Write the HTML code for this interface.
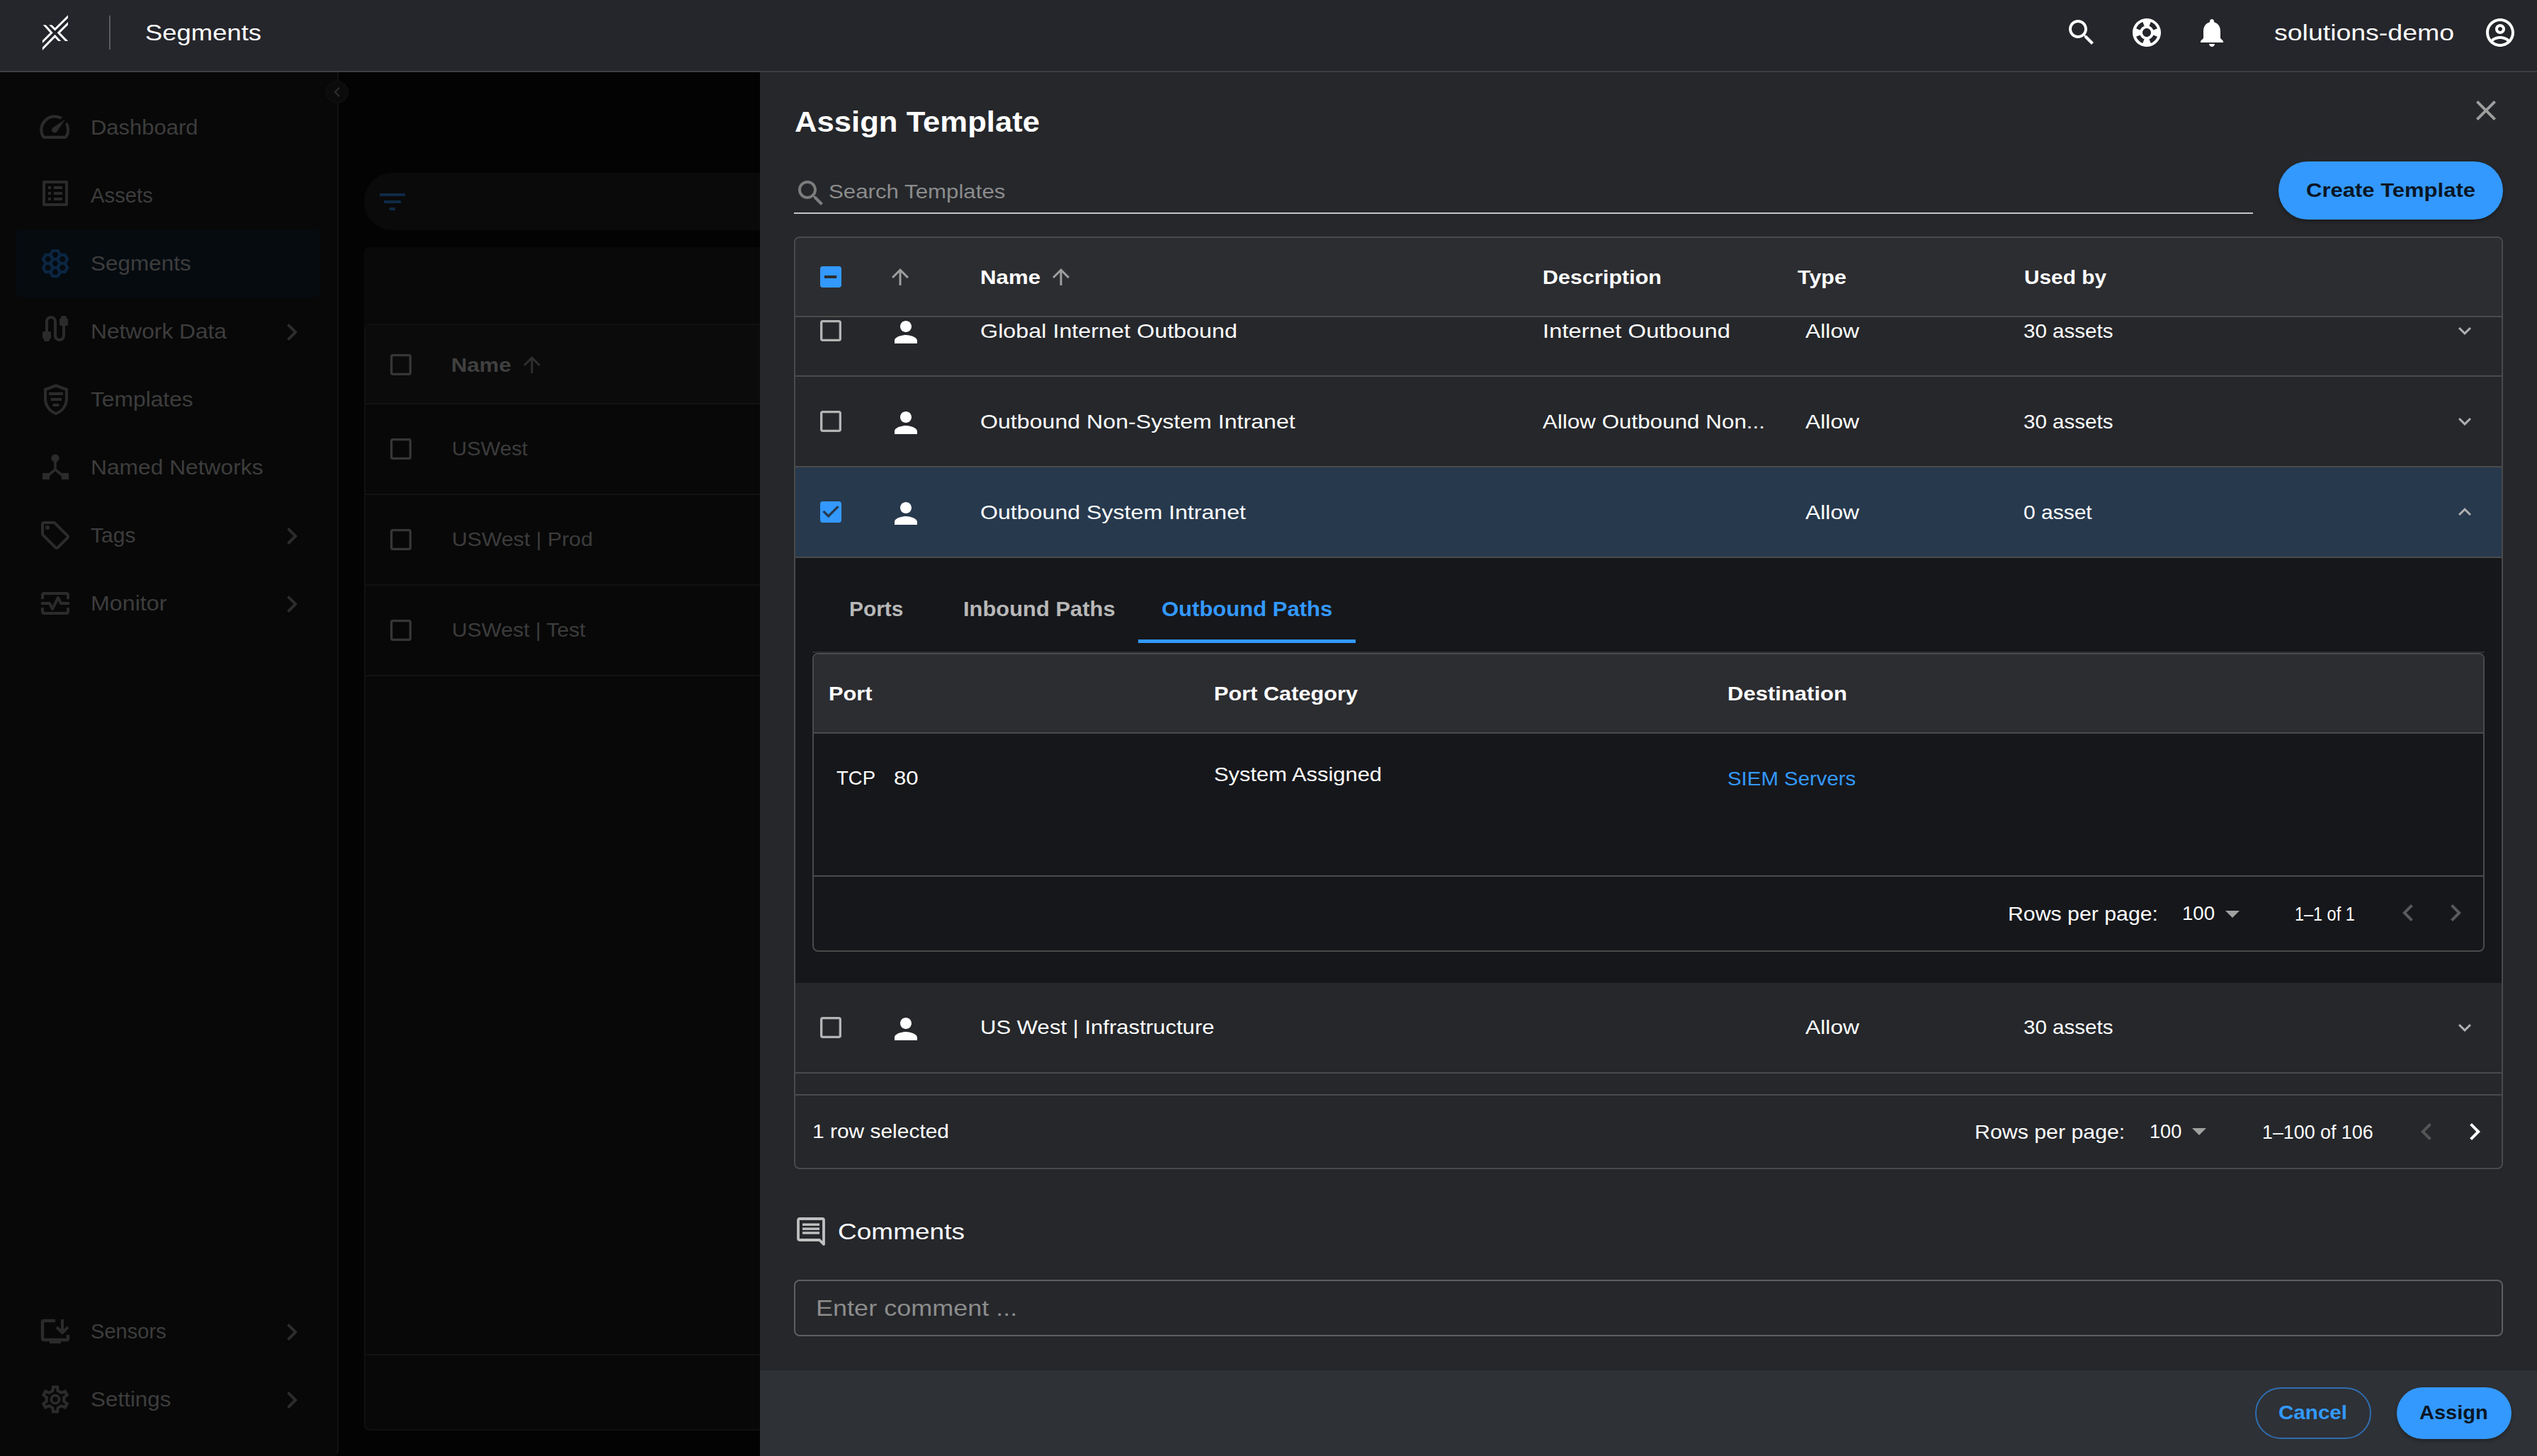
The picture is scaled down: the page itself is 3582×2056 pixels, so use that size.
<!DOCTYPE html><html><head><meta charset="utf-8"><style>
html{overflow:hidden;}html,body{margin:0;padding:0;}body{width:3582px;height:2056px;overflow:hidden;position:relative;background:#030303;font-family:"Liberation Sans",sans-serif;}
.t{position:absolute;white-space:nowrap;}svg{display:block}
</style></head><body>
<div style="position:absolute;left:0px;top:102px;width:478px;height:1954px;background:#080808;border-right:2px solid #121212;box-sizing:border-box;border-bottom-right-radius:8px"></div>
<div style="position:absolute;left:460px;top:114px;width:32px;height:32px;border-radius:50%;background:#0b0b0b;border:1px solid #141414;box-sizing:border-box"></div>
<svg style="position:absolute;left:461.7px;top:116px" width="28" height="28" viewBox="0 0 24 24"><path fill="#2c2c2c" d="M15.41 7.41L14 6l-6 6 6 6 1.41-1.41L10.83 12z"/></svg>
<div style="position:absolute;left:22px;top:324px;width:430px;height:96px;background:#060b10;border-radius:8px"></div>
<div class="t" style="left:127.5px;top:165.0px;font-size:30px;line-height:30px;color:#3d3d3d;font-weight:normal;transform:scaleX(1.0323);transform-origin:0 0;">Dashboard</div>
<svg style="position:absolute;left:51.9px;top:154.0px" width="50.4" height="50.4" viewBox="0 0 24 24"><path fill="#2b2b2b" d="M20.38 8.57l-1.23 1.85a8 8 0 0 1-.22 7.58H5.07A8 8 0 0 1 15.58 6.85l1.85-1.23A10 10 0 0 0 3.35 19a2 2 0 0 0 1.72 1h13.85a2 2 0 0 0 1.74-1 10 10 0 0 0-.27-10.44zm-9.79 6.84a2 2 0 0 0 2.83 0l5.66-8.49-8.49 5.66a2 2 0 0 0 0 2.83z"/></svg>
<div class="t" style="left:127.5px;top:261.1px;font-size:30px;line-height:30px;color:#3d3d3d;font-weight:normal;transform:scaleX(0.9752);transform-origin:0 0;">Assets</div>
<svg style="position:absolute;left:54.4px;top:248.5px" width="48" height="48" viewBox="0 0 24 24"><path fill="#2b2b2b" d="M19 5v14H5V5h14m1.1-2H3.9c-.5 0-.9.4-.9.9v16.2c0 .4.4.9.9.9h16.2c.4 0 .9-.5.9-.9V3.9c0-.5-.5-.9-.9-.9zM11 7h6v2h-6V7zm0 4h6v2h-6v-2zm0 4h6v2h-6zM7 7h2v2H7zm0 4h2v2H7zm0 4h2v2H7z"/></svg>
<div class="t" style="left:127.5px;top:356.6px;font-size:30px;line-height:30px;color:#3d3d3d;font-weight:normal;transform:scaleX(1.0499);transform-origin:0 0;">Segments</div>
<svg style="position:absolute;left:58px;top:352px" width="40" height="40" viewBox="0 0 40 40"><polygon points="26.99,20.00 23.50,26.05 16.51,26.05 13.01,20.00 16.50,13.95 23.50,13.95" fill="none" stroke="#0b2642" stroke-width="4.1"/><polygon points="26.99,7.90 23.50,13.95 16.51,13.95 13.01,7.90 16.50,1.85 23.50,1.85" fill="none" stroke="#0b2642" stroke-width="4.1"/><polygon points="26.99,32.10 23.50,38.15 16.51,38.15 13.01,32.10 16.50,26.05 23.50,26.05" fill="none" stroke="#0b2642" stroke-width="4.1"/><polygon points="16.94,13.95 13.45,20.00 6.46,20.00 2.96,13.95 6.45,7.90 13.45,7.90" fill="none" stroke="#0b2642" stroke-width="4.1"/><polygon points="37.04,13.95 33.55,20.00 26.56,20.00 23.06,13.95 26.55,7.90 33.55,7.90" fill="none" stroke="#0b2642" stroke-width="4.1"/><polygon points="16.94,26.05 13.45,32.10 6.46,32.10 2.96,26.05 6.45,20.00 13.45,20.00" fill="none" stroke="#0b2642" stroke-width="4.1"/><polygon points="37.04,26.05 33.55,32.10 26.56,32.10 23.06,26.05 26.55,20.00 33.55,20.00" fill="none" stroke="#0b2642" stroke-width="4.1"/></svg>
<div class="t" style="left:127.5px;top:452.7px;font-size:30px;line-height:30px;color:#3d3d3d;font-weight:normal;transform:scaleX(1.0565);transform-origin:0 0;">Network Data</div>
<svg style="position:absolute;left:54.4px;top:440.1px" width="48" height="48" viewBox="0 0 24 24"><path fill="#2b2b2b" d="M20 5V4c0-.55-.45-1-1-1h-2c-.55 0-1 .45-1 1v1h-1v4c0 .55.45 1 1 1h1v7c0 1.1-.9 2-2 2s-2-.9-2-2V7c0-2.21-1.79-4-4-4S5 4.79 5 7v7H4c-.55 0-1 .45-1 1v4h1v1c0 .55.45 1 1 1h2c.55 0 1-.45 1-1v-1h1v-4c0-.55-.45-1-1-1H7V7c0-1.1.9-2 2-2s2 .9 2 2v10c0 2.21 1.79 4 4 4s4-1.79 4-4v-7h1c.55 0 1-.45 1-1V5h-1z"/></svg>
<svg style="position:absolute;left:388.2px;top:444.6px" width="48" height="48" viewBox="0 0 24 24"><path fill="#2c2c2c" d="M10 6L8.59 7.41 13.17 12l-4.58 4.59L10 18l6-6z"/></svg>
<div class="t" style="left:127.5px;top:548.5px;font-size:30px;line-height:30px;color:#3d3d3d;font-weight:normal;transform:scaleX(1.0582);transform-origin:0 0;">Templates</div>
<svg style="position:absolute;left:59px;top:541.9px" width="40" height="46" viewBox="0 0 40 46"><path d="M20 2.5 L35 8 V21 C35 31 28.5 39 20 42 C11.5 39 5 31 5 21 V8 Z" fill="none" stroke="#2b2b2b" stroke-width="4"/><rect x="10" y="12" width="20" height="4" fill="#2b2b2b"/><rect x="12.6" y="20" width="15.4" height="4" fill="#2b2b2b"/><rect x="15.6" y="28" width="8.7" height="4" fill="#2b2b2b"/></svg>
<div class="t" style="left:127.5px;top:644.6px;font-size:30px;line-height:30px;color:#3d3d3d;font-weight:normal;transform:scaleX(1.0584);transform-origin:0 0;">Named Networks</div>
<svg style="position:absolute;left:58px;top:640px" width="40" height="40" viewBox="0 0 40 40"><circle cx="20" cy="7" r="5.6" fill="#2b2b2b"/><path d="M20 11 V23 L8 33 M20 23 L32 33" stroke="#2b2b2b" stroke-width="3.6" fill="none"/><rect x="2" y="28" width="10" height="9" fill="#2b2b2b"/><rect x="29" y="28" width="10" height="9" fill="#2b2b2b"/></svg>
<div class="t" style="left:127.5px;top:740.6px;font-size:30px;line-height:30px;color:#3d3d3d;font-weight:normal;transform:scaleX(1.0022);transform-origin:0 0;">Tags</div>
<svg style="position:absolute;left:54px;top:731.8px" width="48" height="48" viewBox="0 0 24 24"><path fill="#2b2b2b" d="M21.41 11.58l-9-9C12.05 2.22 11.55 2 11 2H4c-1.1 0-2 .9-2 2v7c0 .55.22 1.05.59 1.42l9 9c.36.36.86.58 1.41.58.55 0 1.05-.22 1.41-.59l7-7c.37-.36.59-.86.59-1.41 0-.55-.23-1.06-.59-1.42zM13 20.01L4 11V4h7v-.01l9 9-7 7.02zM6.5 5A1.5 1.5 0 1 0 6.5 8 1.5 1.5 0 1 0 6.5 5z"/></svg>
<svg style="position:absolute;left:388.2px;top:732.5px" width="48" height="48" viewBox="0 0 24 24"><path fill="#2c2c2c" d="M10 6L8.59 7.41 13.17 12l-4.58 4.59L10 18l6-6z"/></svg>
<div class="t" style="left:127.5px;top:837.0px;font-size:30px;line-height:30px;color:#3d3d3d;font-weight:normal;transform:scaleX(1.0745);transform-origin:0 0;">Monitor</div>
<svg style="position:absolute;left:54px;top:828.0px" width="48" height="48" viewBox="0 0 24 24"><path fill="#2b2b2b" d="M20 4H4c-1.1 0-2 .9-2 2v3h2V6h16v3h2V6c0-1.1-.9-2-2-2zm0 14H4v-3H2v3c0 1.1.9 2 2 2h16c1.1 0 2-.9 2-2v-3h-2v3zM14.89 7.55c-.34-.68-1.45-.68-1.79 0L10 13.76l-1.11-2.21c-.17-.34-.51-.55-.89-.55H2v2h5.38l1.72 3.45c.18.34.52.55.9.55s.72-.21.89-.55L14 10.24l1.11 2.21c.17.34.51.55.89.55h6v-2h-5.38l-1.73-3.45z"/></svg>
<svg style="position:absolute;left:388.2px;top:828.9px" width="48" height="48" viewBox="0 0 24 24"><path fill="#2c2c2c" d="M10 6L8.59 7.41 13.17 12l-4.58 4.59L10 18l6-6z"/></svg>
<div class="t" style="left:127.5px;top:1865.1px;font-size:30px;line-height:30px;color:#3d3d3d;font-weight:normal;transform:scaleX(0.9696);transform-origin:0 0;">Sensors</div>
<svg style="position:absolute;left:56px;top:1860.5px" width="44" height="40" viewBox="0 0 44 40"><path d="M22 4 H6 Q4 4 4 6 V29 Q4 31 6 31 H38 Q40 31 40 29 V24" fill="none" stroke="#2b2b2b" stroke-width="4.5"/><rect x="14" y="31" width="16" height="5" fill="#2b2b2b"/><path d="M32 2 V21 M24 13 L32 21 L40 13" fill="none" stroke="#2b2b2b" stroke-width="4"/></svg>
<svg style="position:absolute;left:388.2px;top:1857.0px" width="48" height="48" viewBox="0 0 24 24"><path fill="#2c2c2c" d="M10 6L8.59 7.41 13.17 12l-4.58 4.59L10 18l6-6z"/></svg>
<div class="t" style="left:127.5px;top:1960.9px;font-size:30px;line-height:30px;color:#3d3d3d;font-weight:normal;transform:scaleX(1.0471);transform-origin:0 0;">Settings</div>
<svg style="position:absolute;left:53.8px;top:1952.2px" width="48" height="48" viewBox="0 0 48 48"><polygon points="20.32,11.95 21.06,6.44 26.94,6.44 27.68,11.95 32.59,14.78 37.73,12.68 40.67,17.77 36.28,21.17 36.28,26.83 40.67,30.23 37.73,35.32 32.59,33.22 27.68,36.05 26.94,41.56 21.06,41.56 20.32,36.05 15.41,33.22 10.27,35.32 7.33,30.23 11.72,26.83 11.72,21.17 7.33,17.77 10.27,12.68 15.41,14.78" fill="none" stroke="#2b2b2b" stroke-width="4.1" stroke-linejoin="miter"/><circle cx="24" cy="24" r="5.6" fill="none" stroke="#2b2b2b" stroke-width="3.9"/></svg>
<svg style="position:absolute;left:388.2px;top:1952.8px" width="48" height="48" viewBox="0 0 24 24"><path fill="#2c2c2c" d="M10 6L8.59 7.41 13.17 12l-4.58 4.59L10 18l6-6z"/></svg>
<div style="position:absolute;left:514px;top:244px;width:600px;height:81px;background:#0a0a0a;border-radius:40px 0 0 40px"></div>
<svg style="position:absolute;left:530px;top:261px" width="48" height="48" viewBox="0 0 24 24"><path fill="#0f2a47" d="M10 18h4v-2h-4v2zM3 6v2h18V6H3zm3 7h12v-2H6v2z"/></svg>
<div style="position:absolute;left:514px;top:349px;width:600px;height:120px;background:#090909;border-radius:8px 0 0 0"></div>
<div style="position:absolute;left:514px;top:457px;width:600px;height:1563px;background:#080808;border-radius:8px;border:2px solid #101010;box-sizing:border-box"></div>
<div style="position:absolute;left:516px;top:459px;width:600px;height:110px;background:#0b0b0b;border-radius:6px 0 0 0"></div>
<div style="position:absolute;left:516px;top:569px;width:600px;height:2px;background:#121212"></div>
<div style="position:absolute;left:516px;top:697px;width:600px;height:2px;background:#121212"></div>
<div style="position:absolute;left:516px;top:825px;width:600px;height:2px;background:#121212"></div>
<div style="position:absolute;left:516px;top:953px;width:600px;height:2px;background:#121212"></div>
<div style="position:absolute;left:516px;top:1912px;width:600px;height:2px;background:#121212"></div>
<svg style="position:absolute;left:546px;top:495px" width="40" height="40" viewBox="0 0 24 24"><path fill="#363636" d="M19 5v14H5V5h14m0-2H5c-1.1 0-2 .9-2 2v14c0 1.1.9 2 2 2h14c1.1 0 2-.9 2-2V5c0-1.1-.9-2-2-2z"/></svg>
<div class="t" style="left:637.4px;top:501.7px;font-size:28px;line-height:28px;color:#404040;font-weight:bold;transform:scaleX(1.1105);transform-origin:0 0;">Name</div>
<svg style="position:absolute;left:733px;top:497px" width="36" height="36" viewBox="0 0 24 24"><path fill="#2e2e2e" d="M4 12l1.41 1.41L11 7.83V20h2V7.83l5.58 5.59L20 12l-8-8-8 8z"/></svg>
<svg style="position:absolute;left:546px;top:613.9px" width="40" height="40" viewBox="0 0 24 24"><path fill="#363636" d="M19 5v14H5V5h14m0-2H5c-1.1 0-2 .9-2 2v14c0 1.1.9 2 2 2h14c1.1 0 2-.9 2-2V5c0-1.1-.9-2-2-2z"/></svg>
<div class="t" style="left:638.0px;top:620.2px;font-size:28px;line-height:28px;color:#3c3c3c;font-weight:normal;transform:scaleX(1.0473);transform-origin:0 0;">USWest</div>
<svg style="position:absolute;left:546px;top:742px" width="40" height="40" viewBox="0 0 24 24"><path fill="#363636" d="M19 5v14H5V5h14m0-2H5c-1.1 0-2 .9-2 2v14c0 1.1.9 2 2 2h14c1.1 0 2-.9 2-2V5c0-1.1-.9-2-2-2z"/></svg>
<div class="t" style="left:638.0px;top:748.3px;font-size:28px;line-height:28px;color:#3c3c3c;font-weight:normal;transform:scaleX(1.0806);transform-origin:0 0;">USWest | Prod</div>
<svg style="position:absolute;left:546px;top:870px" width="40" height="40" viewBox="0 0 24 24"><path fill="#363636" d="M19 5v14H5V5h14m0-2H5c-1.1 0-2 .9-2 2v14c0 1.1.9 2 2 2h14c1.1 0 2-.9 2-2V5c0-1.1-.9-2-2-2z"/></svg>
<div class="t" style="left:638.0px;top:876.3px;font-size:28px;line-height:28px;color:#3c3c3c;font-weight:normal;transform:scaleX(1.0726);transform-origin:0 0;">USWest | Test</div>
<div style="position:absolute;left:0px;top:0px;width:3582px;height:100px;background:#25262b"></div>
<div style="position:absolute;left:0px;top:100px;width:3582px;height:2px;background:#3d3e42"></div>
<svg style="position:absolute;left:50px;top:15px" width="60" height="60" viewBox="0 0 60 60"><defs><clipPath id="c1"><rect x="9.9" y="20.2" width="36" height="40"/></clipPath><clipPath id="c2"><polygon points="9.9,20.2 27.6,20.2 45.9,2 45.9,60 9.9,60"/></clipPath><clipPath id="c3"><rect x="0" y="0" width="45.9" height="43"/></clipPath><clipPath id="c4"><polygon points="9.9,0 60,0 60,43 27.6,43 9.9,60.7"/></clipPath></defs><g fill="none" stroke="#fff" stroke-width="3.0" stroke-linejoin="miter" stroke-miterlimit="10"><polyline clip-path="url(#c1)" points="9,16 22.7,31.3 7,47"/><polyline clip-path="url(#c3)" points="50,14 32.8,31.3 46,45"/><polyline clip-path="url(#c2)" points="17,16 27.6,26.5 49,5.5"/><polyline clip-path="url(#c4)" points="6,58 27.6,36 37,46"/></g></svg>
<div style="position:absolute;left:154px;top:22px;width:2px;height:48px;background:#5a5b5f"></div>
<div class="t" style="left:205.0px;top:30.3px;font-size:32px;line-height:32px;color:#ffffff;font-weight:normal;transform:scaleX(1.1384);transform-origin:0 0;">Segments</div>
<svg style="position:absolute;left:2915px;top:22px" width="48" height="48" viewBox="0 0 24 24"><path fill="#fff" d="M15.5 14h-.79l-.28-.27C15.41 12.59 16 11.11 16 9.5 16 5.91 13.09 3 9.5 3S3 5.91 3 9.5 5.91 16 9.5 16c1.61 0 3.09-.59 4.23-1.57l.27.28v.79l5 4.99L20.49 19l-4.99-5zm-6 0C7.01 14 5 11.99 5 9.5S7.01 5 9.5 5 14 7.01 14 9.5 11.99 14 9.5 14z"/></svg>
<svg style="position:absolute;left:3007px;top:22px" width="48" height="48" viewBox="0 0 24 24"><path fill="#fff" d="M12 2C6.48 2 2 6.48 2 12s4.48 10 10 10 10-4.48 10-10S17.52 2 12 2zm7.46 7.12-2.78 1.15c-.51-1.36-1.58-2.44-2.95-2.94l1.15-2.78c2.1.8 3.77 2.47 4.58 4.57zM12 15c-1.66 0-3-1.34-3-3s1.34-3 3-3 3 1.34 3 3-1.34 3-3 3zM9.13 4.54l1.17 2.78c-1.38.5-2.47 1.59-2.98 2.97L4.54 9.13c.81-2.11 2.48-3.78 4.59-4.59zM4.54 14.87l2.78-1.15c.51 1.38 1.59 2.46 2.97 2.96l-1.17 2.78c-2.1-.81-3.77-2.48-4.58-4.59zm10.34 4.59-1.15-2.78c1.37-.51 2.45-1.59 2.95-2.97l2.78 1.17c-.81 2.1-2.48 3.77-4.58 4.58z"/></svg>
<svg style="position:absolute;left:3099px;top:22px" width="48" height="48" viewBox="0 0 24 24"><path fill="#fff" d="M12 22c1.1 0 2-.9 2-2h-4c0 1.1.89 2 2 2zm6-6v-5c0-3.07-1.64-5.64-4.5-6.32V4c0-.83-.67-1.5-1.5-1.5s-1.5.67-1.5 1.5v.68C7.63 5.36 6 7.92 6 11v5l-2 2v1h16v-1l-2-2z"/></svg>
<div class="t" style="left:3211.3px;top:29.9px;font-size:32px;line-height:32px;color:#ffffff;font-weight:normal;transform:scaleX(1.1706);transform-origin:0 0;">solutions-demo</div>
<svg style="position:absolute;left:3506px;top:22px" width="48" height="48" viewBox="0 0 24 24"><path fill="#fff" d="M12 2C6.48 2 2 6.48 2 12s4.48 10 10 10 10-4.48 10-10S17.52 2 12 2zM7.07 18.28c.43-.9 3.05-1.78 4.93-1.78s4.51.88 4.93 1.78C15.57 19.36 13.86 20 12 20s-3.57-.64-4.93-1.72zm11.29-1.45c-1.43-1.74-4.9-2.33-6.36-2.33s-4.93.59-6.36 2.33C4.62 15.49 4 13.82 4 12c0-4.41 3.59-8 8-8s8 3.59 8 8c0 1.82-.62 3.49-1.64 4.83zM12 6c-1.94 0-3.5 1.56-3.5 3.5S10.06 13 12 13s3.5-1.56 3.5-3.5S13.94 6 12 6zm0 5c-.83 0-1.5-.67-1.5-1.5S11.17 8 12 8s1.5.67 1.5 1.5S12.83 11 12 11z"/></svg>
<div style="position:absolute;left:1073px;top:102px;width:2509px;height:1833px;background:#25272b"></div>
<div style="position:absolute;left:1073px;top:1935px;width:2509px;height:121px;background:#2e3136"></div>
<div class="t" style="left:1121.5px;top:152.1px;font-size:40px;line-height:40px;color:#ffffff;font-weight:bold;transform:scaleX(1.0911);transform-origin:0 0;">Assign Template</div>
<svg style="position:absolute;left:3486px;top:132px" width="48" height="48" viewBox="0 0 24 24"><path fill="#9e9e9e" d="M19 6.41L17.59 5 12 10.59 6.41 5 5 6.41 10.59 12 5 17.59 6.41 19 12 13.41 17.59 19 19 17.59 13.41 12z"/></svg>
<svg style="position:absolute;left:1121px;top:249px" width="48" height="48" viewBox="0 0 24 24"><path fill="#7c7c7c" d="M15.5 14h-.79l-.28-.27C15.41 12.59 16 11.11 16 9.5 16 5.91 13.09 3 9.5 3S3 5.91 3 9.5 5.91 16 9.5 16c1.61 0 3.09-.59 4.23-1.57l.27.28v.79l5 4.99L20.49 19l-4.99-5zm-6 0C7.01 14 5 11.99 5 9.5S7.01 5 9.5 5 14 7.01 14 9.5 11.99 14 9.5 14z"/></svg>
<div class="t" style="left:1170.4px;top:256.5px;font-size:28px;line-height:28px;color:#8c8c8c;font-weight:normal;transform:scaleX(1.1153);transform-origin:0 0;">Search Templates</div>
<div style="position:absolute;left:1121px;top:300px;width:2060px;height:2px;background:#c4c4c4"></div>
<div style="position:absolute;left:3217px;top:228px;width:317px;height:82px;background:#3399ff;border-radius:41px;box-shadow:0 3px 5px rgba(0,0,0,0.25)"></div>
<div class="t" style="left:3256.0px;top:255.3px;font-size:28px;line-height:28px;color:#0a1625;font-weight:bold;transform:scaleX(1.1075);transform-origin:0 0;">Create Template</div>
<div style="position:absolute;left:1121px;top:334px;width:2413px;height:1317px;border:2px solid #4a4a4a;border-radius:8px;box-sizing:border-box;overflow:hidden"></div>
<div style="position:absolute;left:1123px;top:336px;width:2409px;height:110px;background:#2c2d31;border-radius:6px 6px 0 0"></div>
<div style="position:absolute;left:1123px;top:446px;width:2409px;height:2px;background:#4a4a4a"></div>
<svg style="position:absolute;left:1153px;top:371px" width="40" height="40" viewBox="0 0 24 24"><path fill="#3399ff" d="M19 3H5c-1.1 0-2 .9-2 2v14c0 1.1.9 2 2 2h14c1.1 0 2-.9 2-2V5c0-1.1-.9-2-2-2zm-2 10H7v-2h10v2z"/></svg>
<div style="position:absolute;left:1164px;top:389px;width:17px;height:4px;background:#2c2d31"></div>
<svg style="position:absolute;left:1253px;top:373px" width="36" height="36" viewBox="0 0 24 24"><path fill="#9e9e9e" d="M4 12l1.41 1.41L11 7.83V20h2V7.83l5.58 5.59L20 12l-8-8-8 8z"/></svg>
<div class="t" style="left:1384.4px;top:377.5px;font-size:28px;line-height:28px;color:#ffffff;font-weight:bold;transform:scaleX(1.1171);transform-origin:0 0;">Name</div>
<svg style="position:absolute;left:1480px;top:373px" width="36" height="36" viewBox="0 0 24 24"><path fill="#9e9e9e" d="M4 12l1.41 1.41L11 7.83V20h2V7.83l5.58 5.59L20 12l-8-8-8 8z"/></svg>
<div class="t" style="left:2178.2px;top:377.7px;font-size:28px;line-height:28px;color:#ffffff;font-weight:bold;transform:scaleX(1.0907);transform-origin:0 0;">Description</div>
<div class="t" style="left:2537.5px;top:377.7px;font-size:28px;line-height:28px;color:#ffffff;font-weight:bold;transform:scaleX(1.0904);transform-origin:0 0;">Type</div>
<div class="t" style="left:2858.0px;top:377.7px;font-size:28px;line-height:28px;color:#ffffff;font-weight:bold;transform:scaleX(1.0650);transform-origin:0 0;">Used by</div>
<svg style="position:absolute;left:1153px;top:447.4px" width="40" height="40" viewBox="0 0 24 24"><path fill="#b4b4b4" d="M19 5v14H5V5h14m0-2H5c-1.1 0-2 .9-2 2v14c0 1.1.9 2 2 2h14c1.1 0 2-.9 2-2V5c0-1.1-.9-2-2-2z"/></svg>
<svg style="position:absolute;left:1255px;top:445.4px" width="48" height="48" viewBox="0 0 24 24"><path fill="#ffffff" d="M12 12c2.21 0 4-1.79 4-4s-1.79-4-4-4-4 1.79-4 4 1.79 4 4 4zm0 2c-2.67 0-8 1.34-8 4v2h16v-2c0-2.66-5.33-4-8-4z"/></svg>
<div class="t" style="left:1384.4px;top:453.7px;font-size:28px;line-height:28px;color:#ffffff;font-weight:normal;transform:scaleX(1.1544);transform-origin:0 0;">Global Internet Outbound</div>
<div class="t" style="left:2178.0px;top:453.7px;font-size:28px;line-height:28px;color:#ffffff;font-weight:normal;transform:scaleX(1.1739);transform-origin:0 0;">Internet Outbound</div>
<div class="t" style="left:2549.0px;top:453.7px;font-size:28px;line-height:28px;color:#ffffff;font-weight:normal;transform:scaleX(1.1372);transform-origin:0 0;">Allow</div>
<div class="t" style="left:2857.0px;top:453.7px;font-size:28px;line-height:28px;color:#ffffff;font-weight:normal;transform:scaleX(1.0556);transform-origin:0 0;">30 assets</div>
<svg style="position:absolute;left:3462px;top:449.4px" width="36" height="36" viewBox="0 0 24 24"><path fill="#b0b0b0" d="M16.59 8.59L12 13.17 7.41 8.59 6 10l6 6 6-6z"/></svg>
<div style="position:absolute;left:1123px;top:530px;width:2409px;height:2px;background:#4a4a4a"></div>
<svg style="position:absolute;left:1153px;top:575.4px" width="40" height="40" viewBox="0 0 24 24"><path fill="#b4b4b4" d="M19 5v14H5V5h14m0-2H5c-1.1 0-2 .9-2 2v14c0 1.1.9 2 2 2h14c1.1 0 2-.9 2-2V5c0-1.1-.9-2-2-2z"/></svg>
<svg style="position:absolute;left:1255px;top:573.4px" width="48" height="48" viewBox="0 0 24 24"><path fill="#ffffff" d="M12 12c2.21 0 4-1.79 4-4s-1.79-4-4-4-4 1.79-4 4 1.79 4 4 4zm0 2c-2.67 0-8 1.34-8 4v2h16v-2c0-2.66-5.33-4-8-4z"/></svg>
<div class="t" style="left:1384.4px;top:581.7px;font-size:28px;line-height:28px;color:#ffffff;font-weight:normal;transform:scaleX(1.1475);transform-origin:0 0;">Outbound Non-System Intranet</div>
<div class="t" style="left:2178.0px;top:581.7px;font-size:28px;line-height:28px;color:#ffffff;font-weight:normal;transform:scaleX(1.1208);transform-origin:0 0;">Allow Outbound Non...</div>
<div class="t" style="left:2549.0px;top:581.7px;font-size:28px;line-height:28px;color:#ffffff;font-weight:normal;transform:scaleX(1.1372);transform-origin:0 0;">Allow</div>
<div class="t" style="left:2857.0px;top:581.7px;font-size:28px;line-height:28px;color:#ffffff;font-weight:normal;transform:scaleX(1.0556);transform-origin:0 0;">30 assets</div>
<svg style="position:absolute;left:3462px;top:577.4px" width="36" height="36" viewBox="0 0 24 24"><path fill="#b0b0b0" d="M16.59 8.59L12 13.17 7.41 8.59 6 10l6 6 6-6z"/></svg>
<div style="position:absolute;left:1123px;top:658px;width:2409px;height:2px;background:#4a4a4a"></div>
<div style="position:absolute;left:1123px;top:660px;width:2409px;height:126px;background:#27394d"></div>
<svg style="position:absolute;left:1153px;top:703.2px" width="40" height="40" viewBox="0 0 24 24"><path fill="#3399ff" d="M19 3H5c-1.11 0-2 .9-2 2v14c0 1.1.89 2 2 2h14c1.11 0 2-.9 2-2V5c0-1.1-.89-2-2-2zm-9 14l-5-5 1.41-1.41L10 14.17l7.59-7.59L19 8l-9 9z"/></svg>
<svg style="position:absolute;left:1255px;top:701.2px" width="48" height="48" viewBox="0 0 24 24"><path fill="#ffffff" d="M12 12c2.21 0 4-1.79 4-4s-1.79-4-4-4-4 1.79-4 4 1.79 4 4 4zm0 2c-2.67 0-8 1.34-8 4v2h16v-2c0-2.66-5.33-4-8-4z"/></svg>
<div class="t" style="left:1384.4px;top:709.5px;font-size:28px;line-height:28px;color:#ffffff;font-weight:normal;transform:scaleX(1.1473);transform-origin:0 0;">Outbound System Intranet</div>
<div class="t" style="left:2549.0px;top:709.5px;font-size:28px;line-height:28px;color:#ffffff;font-weight:normal;transform:scaleX(1.1372);transform-origin:0 0;">Allow</div>
<div class="t" style="left:2857.0px;top:709.5px;font-size:28px;line-height:28px;color:#ffffff;font-weight:normal;transform:scaleX(1.0712);transform-origin:0 0;">0 asset</div>
<svg style="position:absolute;left:3462px;top:705.2px" width="36" height="36" viewBox="0 0 24 24"><path fill="#b0b0b0" d="M12 8l-6 6 1.41 1.41L12 10.83l4.59 4.58L18 14z"/></svg>
<div style="position:absolute;left:1123px;top:786px;width:2409px;height:2px;background:#4a4a4a"></div>
<div style="position:absolute;left:1123px;top:788px;width:2409px;height:600px;background:#16171b"></div>
<div class="t" style="left:1199.3px;top:845.1px;font-size:30px;line-height:30px;color:#b8b8b8;font-weight:bold;transform:scaleX(0.9950);transform-origin:0 0;">Ports</div>
<div class="t" style="left:1360.0px;top:845.1px;font-size:30px;line-height:30px;color:#b8b8b8;font-weight:bold;transform:scaleX(1.0301);transform-origin:0 0;">Inbound Paths</div>
<div class="t" style="left:1639.8px;top:845.1px;font-size:30px;line-height:30px;color:#3399ff;font-weight:bold;transform:scaleX(1.0338);transform-origin:0 0;">Outbound Paths</div>
<div style="position:absolute;left:1607px;top:903px;width:307px;height:5px;background:#3399ff"></div>
<div style="position:absolute;left:1147px;top:920px;width:2361px;height:2px;background:#2c2d31"></div>
<div style="position:absolute;left:1147px;top:922px;width:2361px;height:422px;border:2px solid #4a4a4a;border-radius:8px;box-sizing:border-box;background:#16171b;overflow:hidden"></div>
<div style="position:absolute;left:1149px;top:924px;width:2357px;height:110px;background:#2c2d31;border-radius:6px 6px 0 0"></div>
<div style="position:absolute;left:1149px;top:1034px;width:2357px;height:2px;background:#4a4a4a"></div>
<div style="position:absolute;left:1149px;top:1236px;width:2357px;height:2px;background:#4a4a4a"></div>
<div class="t" style="left:1170.0px;top:965.6px;font-size:28px;line-height:28px;color:#ffffff;font-weight:bold;transform:scaleX(1.0982);transform-origin:0 0;">Port</div>
<div class="t" style="left:1714.0px;top:965.6px;font-size:28px;line-height:28px;color:#ffffff;font-weight:bold;transform:scaleX(1.0965);transform-origin:0 0;">Port Category</div>
<div class="t" style="left:2439.0px;top:965.6px;font-size:28px;line-height:28px;color:#ffffff;font-weight:bold;transform:scaleX(1.1085);transform-origin:0 0;">Destination</div>
<div class="t" style="left:1181.4px;top:1085.1px;font-size:28px;line-height:28px;color:#ffffff;font-weight:normal;transform:scaleX(0.9821);transform-origin:0 0;">TCP</div>
<div class="t" style="left:1261.9px;top:1085.1px;font-size:28px;line-height:28px;color:#ffffff;font-weight:normal;transform:scaleX(1.1113);transform-origin:0 0;">80</div>
<div class="t" style="left:1714.0px;top:1080.3px;font-size:28px;line-height:28px;color:#ffffff;font-weight:normal;transform:scaleX(1.1036);transform-origin:0 0;">System Assigned</div>
<div class="t" style="left:2439.4px;top:1085.6px;font-size:28px;line-height:28px;color:#3399ff;font-weight:normal;transform:scaleX(1.0498);transform-origin:0 0;">SIEM Servers</div>
<div class="t" style="left:2835.3px;top:1277.0px;font-size:28px;line-height:28px;color:#ffffff;font-weight:normal;transform:scaleX(1.0810);transform-origin:0 0;">Rows per page:</div>
<div class="t" style="left:3080.8px;top:1276.0px;font-size:28px;line-height:28px;color:#ffffff;font-weight:normal;transform:scaleX(0.9849);transform-origin:0 0;">100</div>
<svg style="position:absolute;left:3127.6px;top:1265.5px" width="48" height="48" viewBox="0 0 24 24"><path fill="#a0a0a0" d="M7 10l5 5 5-5z"/></svg>
<div class="t" style="left:3240.0px;top:1277.0px;font-size:28px;line-height:28px;color:#ffffff;font-weight:normal;transform:scaleX(0.8370);transform-origin:0 0;">1–1 of 1</div>
<svg style="position:absolute;left:3376px;top:1265.4px" width="48" height="48" viewBox="0 0 24 24"><path fill="#5a5a5a" d="M15.41 7.41L14 6l-6 6 6 6 1.41-1.41L10.83 12z"/></svg>
<svg style="position:absolute;left:3443.4px;top:1265.4px" width="48" height="48" viewBox="0 0 24 24"><path fill="#5a5a5a" d="M10 6L8.59 7.41 13.17 12l-4.58 4.59L10 18l6-6z"/></svg>
<svg style="position:absolute;left:1153px;top:1431.1px" width="40" height="40" viewBox="0 0 24 24"><path fill="#b4b4b4" d="M19 5v14H5V5h14m0-2H5c-1.1 0-2 .9-2 2v14c0 1.1.9 2 2 2h14c1.1 0 2-.9 2-2V5c0-1.1-.9-2-2-2z"/></svg>
<svg style="position:absolute;left:1255px;top:1429.1px" width="48" height="48" viewBox="0 0 24 24"><path fill="#ffffff" d="M12 12c2.21 0 4-1.79 4-4s-1.79-4-4-4-4 1.79-4 4 1.79 4 4 4zm0 2c-2.67 0-8 1.34-8 4v2h16v-2c0-2.66-5.33-4-8-4z"/></svg>
<div class="t" style="left:1384.4px;top:1437.4px;font-size:28px;line-height:28px;color:#ffffff;font-weight:normal;transform:scaleX(1.1101);transform-origin:0 0;">US West | Infrastructure</div>
<div class="t" style="left:2549.0px;top:1437.4px;font-size:28px;line-height:28px;color:#ffffff;font-weight:normal;transform:scaleX(1.1372);transform-origin:0 0;">Allow</div>
<div class="t" style="left:2857.0px;top:1437.4px;font-size:28px;line-height:28px;color:#ffffff;font-weight:normal;transform:scaleX(1.0556);transform-origin:0 0;">30 assets</div>
<svg style="position:absolute;left:3462px;top:1433.1px" width="36" height="36" viewBox="0 0 24 24"><path fill="#b0b0b0" d="M16.59 8.59L12 13.17 7.41 8.59 6 10l6 6 6-6z"/></svg>
<div style="position:absolute;left:1123px;top:1514px;width:2409px;height:2px;background:#4a4a4a"></div>
<div style="position:absolute;left:1123px;top:1545px;width:2409px;height:2px;background:#4a4a4a"></div>
<div class="t" style="left:1147.2px;top:1584.3px;font-size:28px;line-height:28px;color:#ffffff;font-weight:normal;transform:scaleX(1.0690);transform-origin:0 0;">1 row selected</div>
<div class="t" style="left:2788.3px;top:1584.7px;font-size:28px;line-height:28px;color:#ffffff;font-weight:normal;transform:scaleX(1.0825);transform-origin:0 0;">Rows per page:</div>
<div class="t" style="left:3034.6px;top:1583.7px;font-size:28px;line-height:28px;color:#ffffff;font-weight:normal;transform:scaleX(0.9678);transform-origin:0 0;">100</div>
<svg style="position:absolute;left:3081.2px;top:1573px" width="48" height="48" viewBox="0 0 24 24"><path fill="#a0a0a0" d="M7 10l5 5 5-5z"/></svg>
<div class="t" style="left:3194.2px;top:1584.7px;font-size:28px;line-height:28px;color:#ffffff;font-weight:normal;transform:scaleX(0.9578);transform-origin:0 0;">1–100 of 106</div>
<svg style="position:absolute;left:3402px;top:1574.3px" width="48" height="48" viewBox="0 0 24 24"><path fill="#555555" d="M15.41 7.41L14 6l-6 6 6 6 1.41-1.41L10.83 12z"/></svg>
<svg style="position:absolute;left:3469.6px;top:1574.3px" width="48" height="48" viewBox="0 0 24 24"><path fill="#ffffff" d="M10 6L8.59 7.41 13.17 12l-4.58 4.59L10 18l6-6z"/></svg>
<svg style="position:absolute;left:1125px;top:1719px" width="40" height="40" viewBox="0 0 40 40"><path d="M2 4 Q2 2 4 2 H36 Q38 2 38 4 V38 L32 32 H4 Q2 32 2 30 Z" fill="none" stroke="#c0c0c0" stroke-width="3.8" stroke-linejoin="round"/><rect x="8" y="8.5" width="24" height="3.4" fill="#c0c0c0"/><rect x="8" y="14.5" width="24" height="3.4" fill="#c0c0c0"/><rect x="8" y="20.3" width="24" height="3.4" fill="#c0c0c0"/></svg>
<div class="t" style="left:1182.6px;top:1722.9px;font-size:32px;line-height:32px;color:#ffffff;font-weight:normal;transform:scaleX(1.1569);transform-origin:0 0;">Comments</div>
<div style="position:absolute;left:1121px;top:1807px;width:2413px;height:80px;border:2px solid #5f5f5f;border-radius:8px;box-sizing:border-box"></div>
<div class="t" style="left:1151.5px;top:1830.8px;font-size:32px;line-height:32px;color:#8c8c8c;font-weight:normal;transform:scaleX(1.1261);transform-origin:0 0;">Enter comment ...</div>
<div style="position:absolute;left:3184px;top:1959px;width:164px;height:73px;border:2px solid #2f6db0;border-radius:37px;box-sizing:border-box"></div>
<div class="t" style="left:3217.1px;top:1981.3px;font-size:28px;line-height:28px;color:#3399ff;font-weight:bold;transform:scaleX(1.0565);transform-origin:0 0;">Cancel</div>
<div style="position:absolute;left:3384px;top:1959px;width:162px;height:73px;background:#3399ff;border-radius:37px;box-shadow:0 3px 5px rgba(0,0,0,0.25)"></div>
<div class="t" style="left:3416.0px;top:1981.3px;font-size:28px;line-height:28px;color:#0a1625;font-weight:bold;transform:scaleX(1.0348);transform-origin:0 0;">Assign</div>
<script>(function(){var w=window.innerWidth||3582;var s=w/3582;if(Math.abs(s-1)>0.01){document.body.style.transformOrigin="0 0";document.body.style.transform="scale("+s+")";}})();</script>
</body></html>
